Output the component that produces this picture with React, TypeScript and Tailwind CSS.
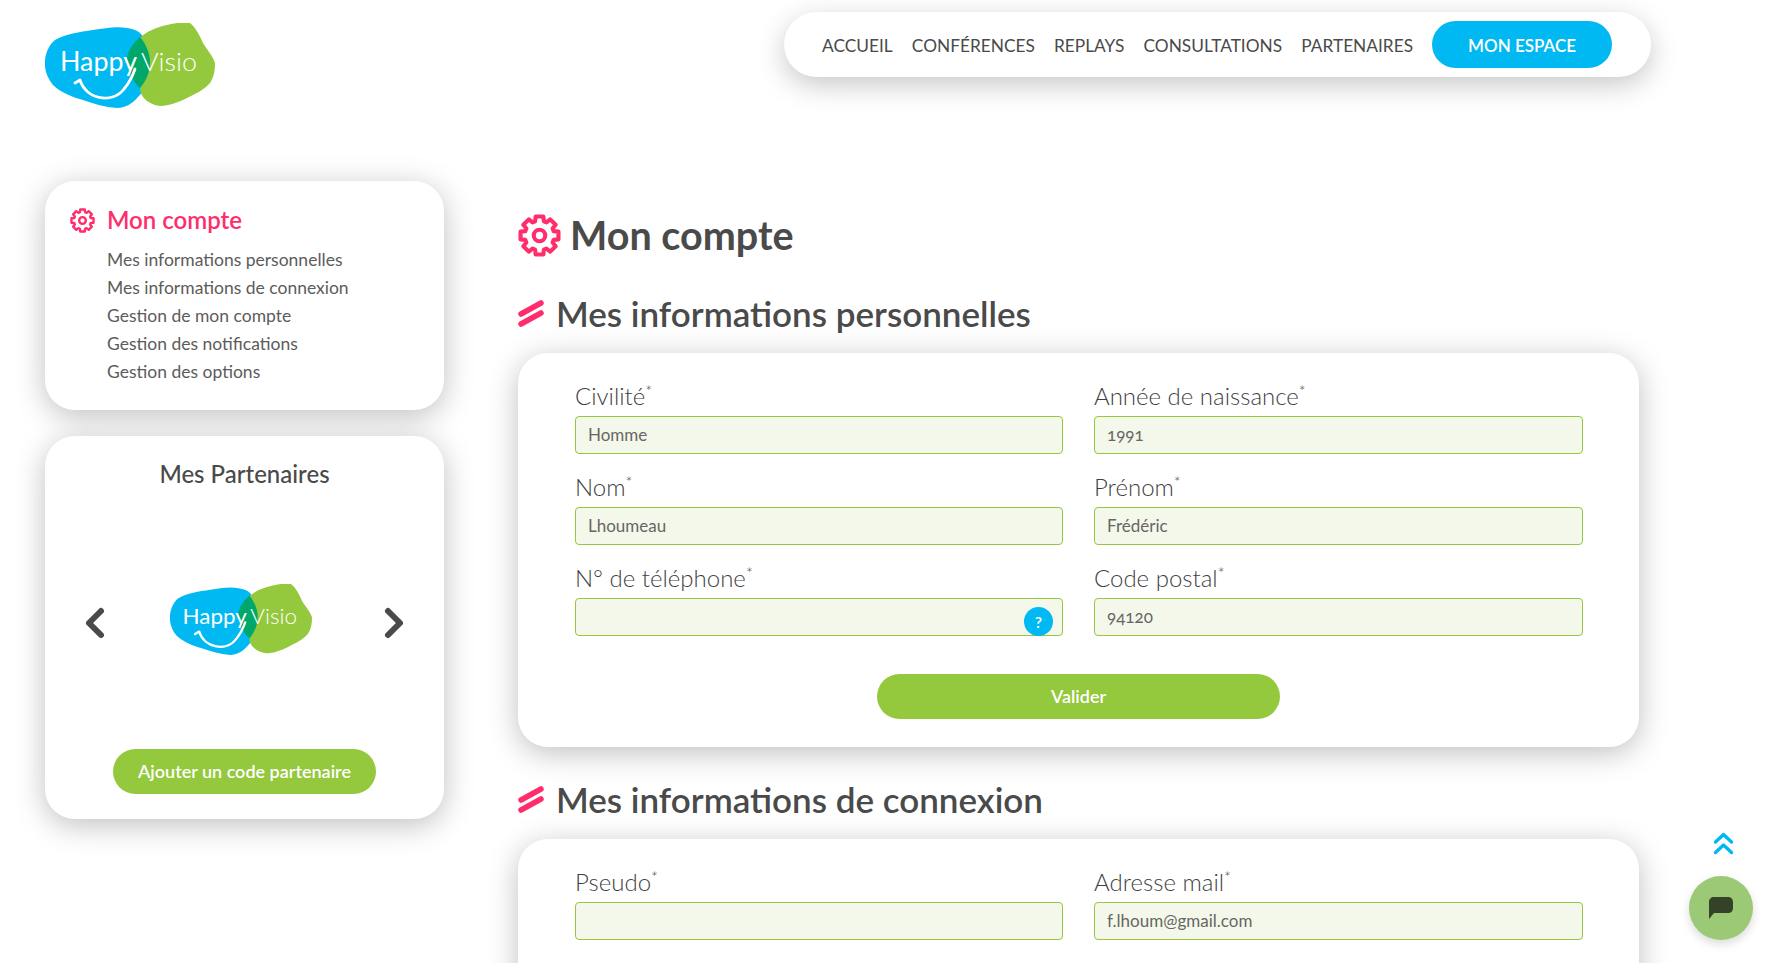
import React from 'react';

const font = "font-['Lato','Liberation_Sans',sans-serif]";
const cardShadow = 'shadow-[0_6px_30px_rgba(0,0,0,0.25)]';

function Logo({ className = '' }: { className?: string }) {
  return (
    <svg viewBox="0 0 170 85" className={className}>
      <path d="M0 37 C1 28 5 21 10 17 C20 11 35 9 48 7 C60 5 72 3 82 5 C90 6 96 9 98 14 C103 21 105 29 105 37 C105 46 104 53 102 60 C100 66 97 70 93 74 C87 81 80 85 72 85 C60 84 49 81 38 77 C27 74 15 69 8 62 C2 55 -1 46 0 37 Z" fill="#00b9f2" />
      <path d="M95 15 C102 8 112 4 122 2 C130 0 138 -1 145 0 C151 5 155 13 158 20 C162 27 168 33 170 40 C170 47 169 54 165 60 C159 67 150 71 142 75 C134 79 124 83 115 83 C108 82 102 79 98 74 C96 71 95 68 95 65 C103 52 107 30 95 15 Z" fill="#94c83d" />
      <path d="M95 14 C89 19 84 26 82 34 C82 46 87 58 95 65 C101 58 105 49 105 40 C105 30 101 21 95 14 Z" fill="#00a76a" />
      <text x="15" y="48" textLength="77" lengthAdjust="spacingAndGlyphs" fill="#fff" fontSize="26" fontFamily="'Lato',sans-serif">Happy</text>
      <text x="96" y="48" textLength="56" lengthAdjust="spacingAndGlyphs" fill="#fff" fontSize="26" fontWeight="300" fontFamily="'Lato',sans-serif">Visio</text>
      <path d="M30 60 L35 57 C41 77 68 81 79 66 C84 60 88 52 90 46" fill="none" stroke="#fff" strokeWidth="2.8" strokeLinecap="round" strokeLinejoin="round" />
    </svg>
  );
}

// 8 tooth gear outline, same shape as the reference cog
const gearPath = (() => {
  const pts: string[] = [];
  for (let i = 0; i < 8; i++) {
    const a = (i * Math.PI) / 4 - Math.PI / 2;
    const spots: [number, number][] = [
      [8.3, -0.3],
      [10.8, -0.2],
      [10.8, 0.2],
      [8.3, 0.3],
    ];
    spots.forEach(([r, d]) => {
      const x = 12 + r * Math.cos(a + d);
      const y = 12 + r * Math.sin(a + d);
      pts.push(`${x.toFixed(2)} ${y.toFixed(2)}`);
    });
  }
  return `M${pts.join(' L')} Z`;
})();

function Gear({ className = '' }: { className?: string }) {
  return (
    <svg viewBox="0 0 24 24" fill="none" stroke="#ff2d6b" strokeWidth="2.3" strokeLinejoin="round" className={className}>
      <path d={gearPath} />
      <circle cx="12" cy="12" r="3.2" />
    </svg>
  );
}

function Chevron({ dir }: { dir: 'left' | 'right' }) {
  return (
    <svg viewBox="0 0 24 36" className="h-[36px] w-[24px]" fill="none" stroke="#4a4a4a" strokeWidth="6" strokeLinecap="round" strokeLinejoin="round">
      <path d={dir === 'left' ? 'M18 6 L6 18 L18 30' : 'M6 6 L18 18 L6 30'} />
    </svg>
  );
}

function Slashes() {
  return (
    <svg viewBox="0 0 26 27" className="mr-[12px] h-[27px] w-[26px]">
      <path d="M3 14 L23 3" stroke="#ff2d6b" strokeWidth="5.5" strokeLinecap="round" />
      <path d="M3 24 L23 13" stroke="#ff2d6b" strokeWidth="5.5" strokeLinecap="round" />
    </svg>
  );
}

function Field({ label, value, help }: { label: string; value?: string; help?: boolean }) {
  return (
    <div>
      <label className="block text-[24px] font-light leading-[28px] text-[#3f3f3f]">
        {label}
        <sup className="text-[16px]">*</sup>
      </label>
      <div className="relative mt-[6px] flex h-[38px] items-center rounded-[4px] border border-[#94c83d] bg-[#f4f8ea] px-3 text-[17px] text-[#666666] oldstyle-nums">
        {value}
        {help && (
          <span className="absolute right-[9px] top-[8px] flex h-[29px] w-[29px] items-center justify-center rounded-full bg-[#00b9f2] text-[16px] font-semibold text-white">
            ?
          </span>
        )}
      </div>
    </div>
  );
}

export default function App() {
  const links = [
    'Mes informations personnelles',
    'Mes informations de connexion',
    'Gestion de mon compte',
    'Gestion des notifications',
    'Gestion des options',
  ];
  const nav = ['ACCUEIL', 'CONFÉRENCES', 'REPLAYS', 'CONSULTATIONS', 'PARTENAIRES'];

  return (
    <div className={`relative h-[963px] w-full overflow-hidden bg-white ${font} text-[#4a4a4a]`}>
      <header className="flex items-start justify-between pl-[45px] pr-[116px] pt-[12px]">
        <Logo className="mt-[11px] h-[85px] w-[170px]" />
        <nav className="flex h-[65px] w-[867px] items-center rounded-[33px] bg-white pl-[38px] text-[17.3px] text-[#4a4a4a] shadow-[0_8px_28px_rgba(0,0,0,0.22)]">
          <div className="flex gap-[19.2px] pt-[2px]">
            {nav.map((n) => (
              <span key={n}>{n}</span>
            ))}
          </div>
          <span className="ml-[19px] flex h-[47px] w-[180px] items-center justify-center rounded-full bg-[#00b9f2] pt-[2px] text-[17px] font-semibold text-white">
            MON ESPACE
          </span>
        </nav>
      </header>

      <div className="mt-[73px] flex pl-[45px]">
        <aside className="w-[399px] shrink-0">
          <section className={`h-[229px] rounded-[30px] bg-white pl-[25px] pt-[21px] ${cardShadow}`}>
            <div className="flex items-center text-[24px] font-semibold text-[#ff2d6b]">
              <Gear className="mr-[12px] h-[25px] w-[25px]" />
              Mon compte
            </div>
            <ul className="mt-[8px] pl-[37px] text-[17.5px] leading-[28px] text-[#5c5c5c]">
              {links.map((l) => (
                <li key={l}>{l}</li>
              ))}
            </ul>
          </section>

          <section className={`mt-[26px] flex h-[383px] flex-col items-center rounded-[30px] bg-white ${cardShadow}`}>
            <h3 className="mt-[22px] text-[24px] font-medium leading-[32px]">Mes Partenaires</h3>
            <div className="mt-[109px] flex h-[48px] w-full items-center justify-between px-[38px]">
              <Chevron dir="left" />
              <Logo className="mb-[8px] mr-[7px] h-[71px] w-[142px]" />
              <Chevron dir="right" />
            </div>
            <button className="mt-[102px] h-[45px] w-[263px] rounded-full bg-[#94c83d] text-[18px] font-semibold text-white">
              Ajouter un code partenaire
            </button>
          </section>
        </aside>

        <main className="ml-[74px] w-[1121px] shrink-0">
          <h1 className="mt-[31px] flex items-center text-[39.5px] font-bold leading-[46px]">
            <Gear className="mr-[9px] h-[43px] w-[43px]" />
            Mon compte
          </h1>
          <h2 className="mt-[35px] flex items-center text-[35px] font-semibold leading-[40px]">
            <Slashes />
            Mes informations personnelles
          </h2>
          <section className={`mt-[20px] h-[394px] rounded-[30px] bg-white px-[56px] pt-[29px] ${cardShadow}`}>
            <div className="ml-[1px] grid grid-cols-[488px_489px] gap-x-[31px] gap-y-[19px]">
              <Field label="Civilité" value="Homme" />
              <Field label="Année de naissance" value="1991" />
              <Field label="Nom" value="Lhoumeau" />
              <Field label="Prénom" value="Frédéric" />
              <Field label="N° de téléphone" help />
              <Field label="Code postal" value="94120" />
            </div>
            <button className="mx-auto mt-[38px] block h-[45px] w-[403px] rounded-full bg-[#94c83d] text-[18px] font-semibold text-white">
              Valider
            </button>
          </section>
          <h2 className="mt-[32px] flex items-center text-[35px] font-semibold leading-[40px]">
            <Slashes />
            Mes informations de connexion
          </h2>
          <section className={`mt-[20px] h-[200px] rounded-[30px] bg-white px-[56px] pt-[29px] ${cardShadow}`}>
            <div className="ml-[1px] grid grid-cols-[488px_489px] gap-x-[31px]">
              <Field label="Pseudo" />
              <Field label="Adresse mail" value="f.lhoum@gmail.com" />
            </div>
          </section>
        </main>
      </div>

      <svg viewBox="0 0 21 23" className="absolute left-[1713px] top-[832px] h-[23px] w-[21px]" fill="none" stroke="#00b9f2" strokeWidth="3.4" strokeLinecap="round" strokeLinejoin="round">
        <path d="M2.5 10 L10.5 2.5 L18.5 10" />
        <path d="M2.5 20.5 L10.5 13 L18.5 20.5" />
      </svg>
      <button className="absolute left-[1689px] top-[876px] flex h-[64px] w-[64px] items-center justify-center rounded-full bg-[#9bc975] shadow-[0_4px_10px_rgba(0,0,0,0.15)]">
        <svg viewBox="0 0 26 24" className="h-[24px] w-[26px]">
          <path d="M6 1 H20 C23 1 25 3 25 6 V12 C25 15 23 17 20 17 H6 L1 23 V6 C1 3 3 1 6 1 Z" fill="#344327" />
        </svg>
      </button>
    </div>
  );
}
